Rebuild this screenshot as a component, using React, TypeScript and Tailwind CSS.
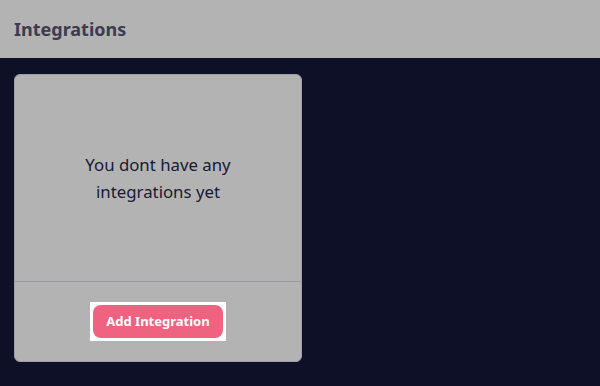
export default function App() {
  return (
    <div
      className="w-full min-h-[386px] bg-[#0e1027] flex flex-col"
      style={{ fontFamily: "'Noto Sans', Lato, sans-serif" }}
    >
      <header className="h-[58px] bg-[#b3b3b3] flex items-center px-[14px]">
        <h1 className="text-[18px] font-bold text-[#3b3b52]">Integrations</h1>
      </header>

      <div className="px-[14px] pt-[16px]">
        <div className="w-[288px] h-[288px] bg-[#b3b3b3] border border-[#9d9dab] rounded-[6px] flex flex-col">
          <div className="h-[207px] flex items-center justify-center border-b border-[#9a9aa8]">
            <p className="text-[16.8px] leading-[27px] text-[#171a33] text-center w-[180px]">
              You dont have any integrations yet
            </p>
          </div>
          <div className="flex-1 flex items-center justify-center">
            <div className="bg-white p-[3px]">
              <button className="h-[33px] px-[13px] rounded-[8px] bg-[#ef6380] text-white text-[13px] font-bold">
                Add Integration
              </button>
            </div>
          </div>
        </div>
      </div>
    </div>
  );
}
